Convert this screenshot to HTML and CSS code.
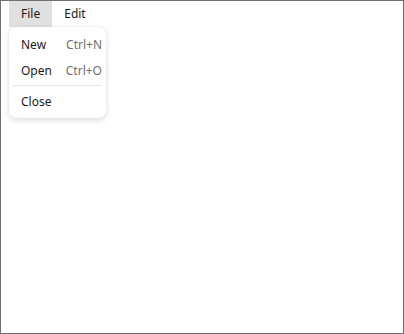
FILE: index.html
```html
<!DOCTYPE html>
<html lang="en">
<head>
  <meta charset="UTF-8">
  <title>Menu</title>
  <link rel="stylesheet" href="styles.css">
</head>
<body>
  <div class="window">
    <nav class="menubar">
      <div class="menu open">
        <span class="menu_title">File</span>
        <ul class="dropdown">
          <li class="item"><span class="label">New</span><span class="shortcut">Ctrl+N</span></li>
          <li class="item"><span class="label">Open</span><span class="shortcut">Ctrl+O</span></li>
          <li class="sep"></li>
          <li class="item"><span class="label">Close</span></li>
        </ul>
      </div>
      <div class="menu">
        <span class="menu_title">Edit</span>
      </div>
    </nav>
  </div>
</body>
</html>
```

FILE: styles.css
```css
*,*:before,*:after{
  box-sizing: border-box;
  margin: 0;
  padding: 0;
}
html,body{
  height: 100%;
}
body{
  font-family: "Noto Sans", "Open Sans", sans-serif;
  font-size: 12px;
  color: #1a1a1a;
  background: #fff;
}
.window{
  height: 100%;
  border: 1px solid #707070;
  padding: 0 8px;
}
.menubar{
  display: flex;
  height: 26px;
}
.menu{
  position: relative;
}
.menu_title{
  display: block;
  height: 26px;
  line-height: 26px;
  padding: 0 12px;
}
.menu.open .menu_title{
  background: #e0e0e0;
}
.dropdown{
  position: absolute;
  left: 0;
  top: 26px;
  width: 97px;
  padding: 4px 0;
  list-style: none;
  background: #fff;
  border-radius: 7px;
  box-shadow: 0 2px 6px rgba(0,0,0,0.14), 0 0 1px rgba(0,0,0,0.12);
}
.item{
  display: flex;
  align-items: center;
  height: 26px;
  padding: 0 4px 0 12px;
}
.label{
  flex: 1;
}
.shortcut{
  color: #6e6e6e;
}
.sep{
  height: 1px;
  margin: 2px 4px 2px;
  background: #e2e2e2;
}
```
